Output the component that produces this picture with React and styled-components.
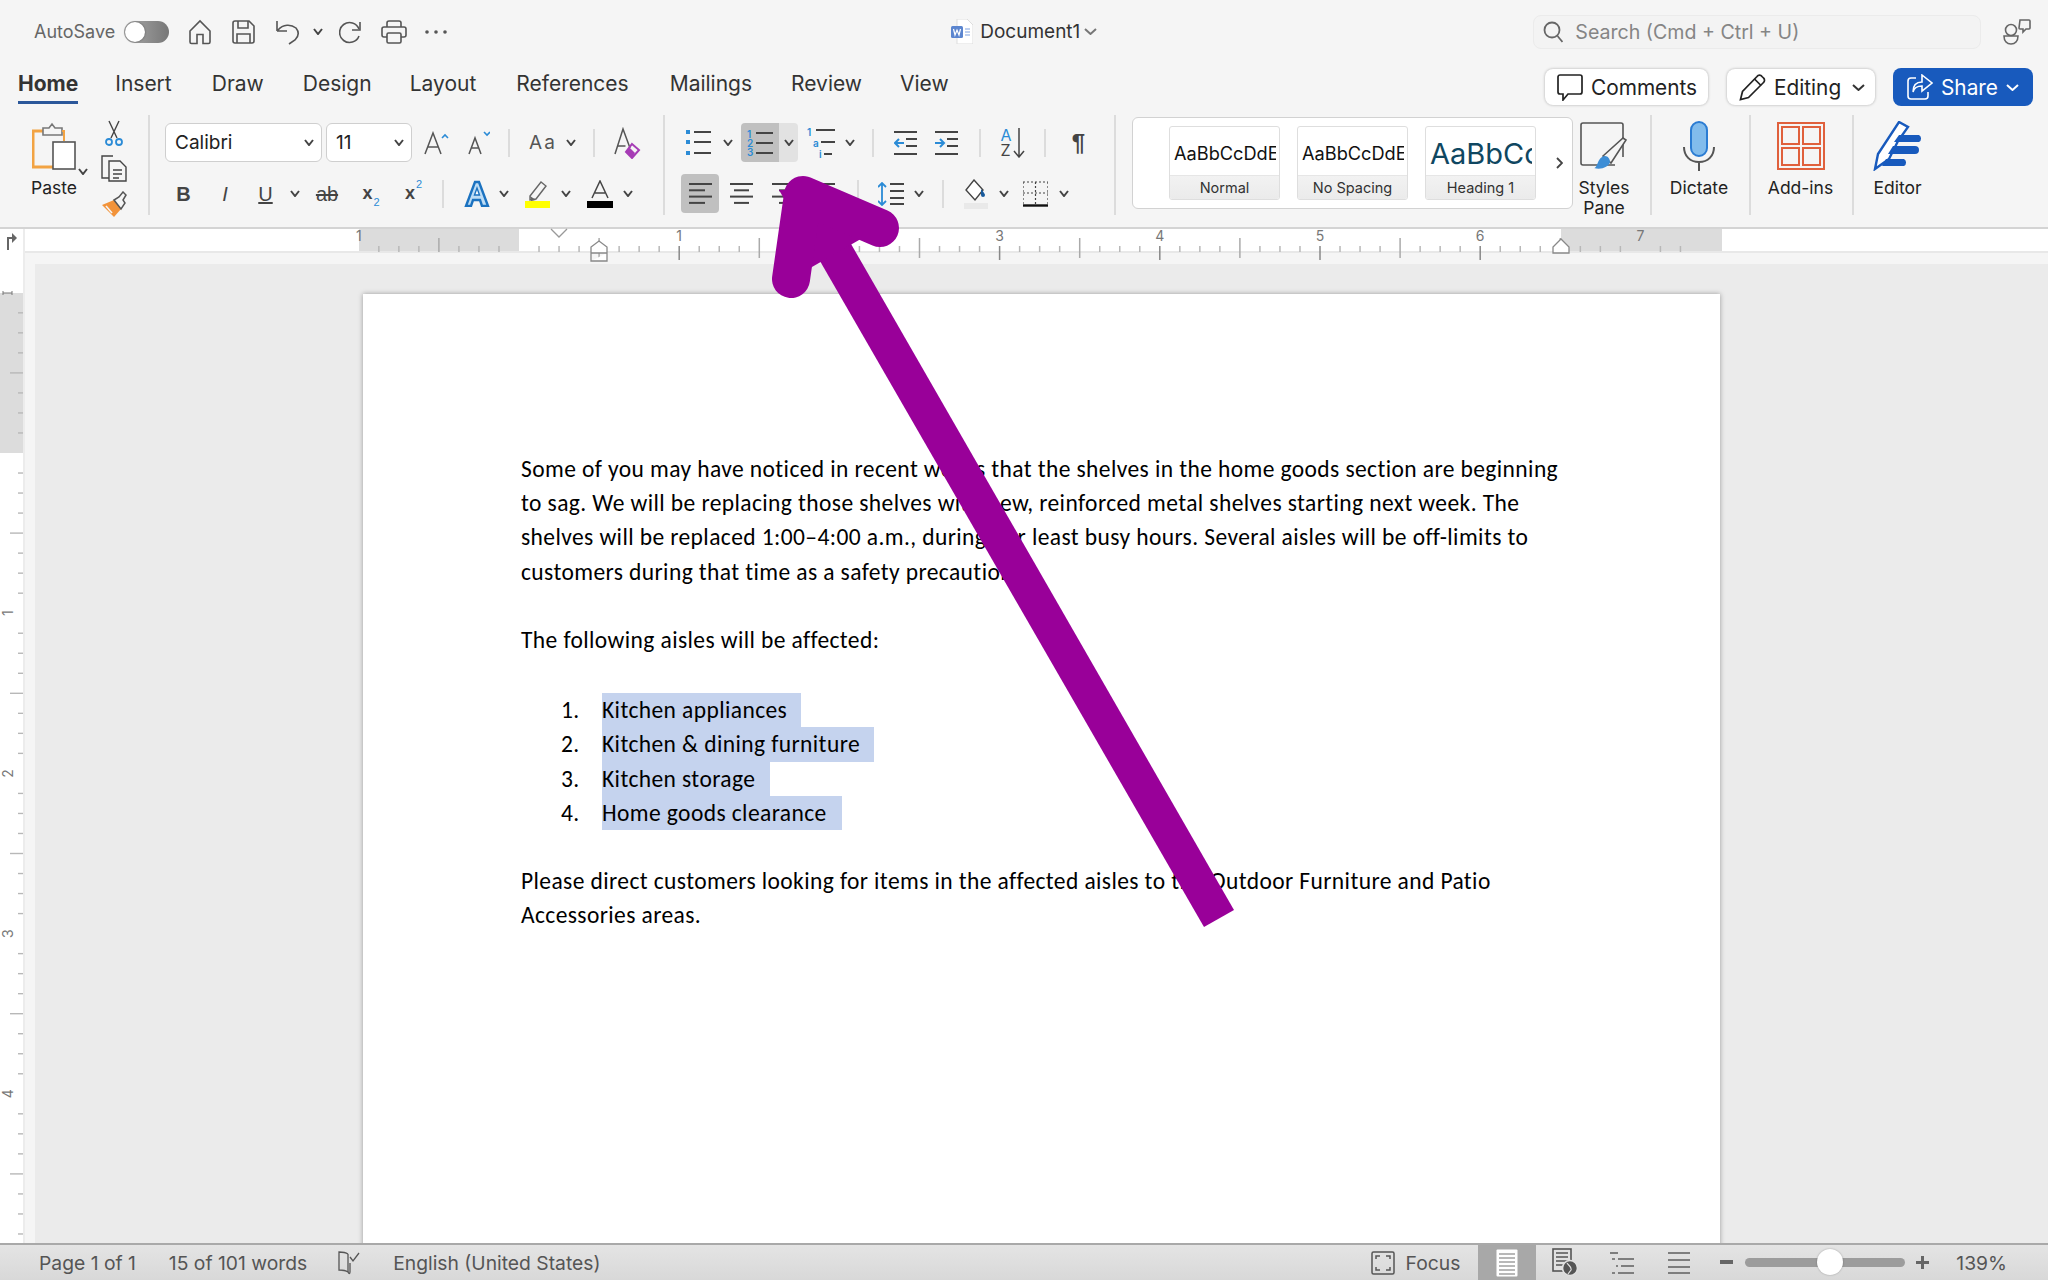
import React from 'react';
import styled, { createGlobalStyle } from 'styled-components';

const GlobalStyle = createGlobalStyle`
  html, body { margin: 0; padding: 0; background: #f5f5f5; }
  body { font-family: Inter, "Liberation Sans", sans-serif; overflow: hidden; }
`;

const Window = styled.div`
  position: relative;
  width: 2048px;
  height: 1280px;
  display: flex;
  flex-direction: column;
  overflow: hidden;
  background: #f5f5f5;
`;

/* title bar */
const TitleBar = styled.div`
  height: 63px;
  flex-shrink: 0;
  display: flex;
  align-items: center;
`;
const AutoSaveLabel = styled.span`
  margin-left: 34px;
  font-size: 18px;
  color: #666;
`;
const Toggle = styled.div`
  width: 45px;
  height: 22px;
  margin-left: 9px;
  border-radius: 11px;
  background: linear-gradient(90deg, #aaa, #777);
  display: flex;
  align-items: center;
  padding-left: 1px;
  box-sizing: border-box;
`;
const Knob = styled.div`
  width: 20px;
  height: 20px;
  border-radius: 50%;
  background: #fff;
  box-shadow: 0 0 2px rgba(0, 0, 0, 0.5);
`;
const Slot = styled.div`
  width: ${p => p.$w}px;
  margin-left: ${p => p.$ml || 0}px;
  flex-shrink: 0;
  display: flex;
  align-items: center;
  justify-content: center;
`;
const DocTitle = styled.span`
  margin-left: 7px;
  font-size: 19px;
  color: #333;
`;
const SearchBox = styled.div`
  width: 448px;
  height: 34px;
  margin-left: 436px;
  box-sizing: border-box;
  background: #f3f3f3;
  border: 1px solid #ebebeb;
  border-radius: 8px;
  display: flex;
  align-items: center;
  padding-left: 9px;
  gap: 12px;
`;
const SearchText = styled.span`
  font-size: 19.6px;
  color: #858585;
`;

/* tab row */
const TabRow = styled.div`
  height: 52px;
  flex-shrink: 0;
  display: flex;
  align-items: flex-start;
  box-sizing: border-box;
  padding-left: 18px;
`;
const Tab = styled.div`
  height: 41px;
  margin-right: ${p => p.$mr}px;
  box-sizing: border-box;
  padding-top: 9px;
  font-size: 21px;
  line-height: 24px;
  font-weight: ${p => (p.$active ? 700 : 400)};
  color: #333;
  border-bottom: ${p => (p.$active ? '3px solid #2b579a' : '3px solid transparent')};
`;
const TabActions = styled.div`
  margin-left: auto;
  margin-right: 15px;
  padding-top: 5px;
  display: flex;
  align-items: center;
`;
const ActionButton = styled.div`
  height: 36px;
  width: ${p => p.$w}px;
  margin-left: ${p => p.$ml}px;
  box-sizing: border-box;
  display: flex;
  align-items: center;
  padding-left: 12px;
  gap: 8px;
  background: #fff;
  border-radius: 8px;
  box-shadow: 0 0 3px rgba(0, 0, 0, 0.3);
  font-size: 20.8px;
  color: #222;
`;
const ShareButton = styled(ActionButton)`
  height: 38px;
  background: #185abd;
  box-shadow: none;
  color: #fff;
  padding-left: 14px;
`;

/* ribbon */
const Ribbon = styled.div`
  height: 112px;
  flex-shrink: 0;
  display: flex;
  align-items: stretch;
`;
const Sep = styled.div`
  width: 2px;
  flex-shrink: 0;
  background: #dcdcdc;
  margin-bottom: 12px;
`;
const MiniSep = styled.div`
  width: 2px;
  height: 28px;
  flex-shrink: 0;
  margin-left: ${p => p.$ml}px;
  background: #dcdcdc;
`;
const PasteGroup = styled.div`
  width: 148px;
  flex-shrink: 0;
  display: flex;
`;
const PasteColumn = styled.div`
  margin-left: 27px;
  width: 54px;
  display: flex;
  flex-direction: column;
  align-items: center;
  padding-top: 7px;
`;
const RibbonLabel = styled.span`
  font-size: 17.5px;
  line-height: 20px;
  color: #222;
  text-align: center;
`;
const PasteLabel = styled(RibbonLabel)`
  margin-top: 8px;
`;
const ClipColumn = styled.div`
  margin-left: 12px;
  padding-top: 5px;
  width: 27px;
  display: flex;
  flex-direction: column;
  align-items: center;
  gap: 9px;
`;
const TwoRows = styled.div`
  width: ${p => p.$w}px;
  flex-shrink: 0;
  display: flex;
  flex-direction: column;
  padding-top: 8px;
  gap: 12px;
`;
const ToolRow = styled.div`
  height: 39px;
  display: flex;
  align-items: center;
`;
const Select = styled.div`
  width: ${p => p.$w}px;
  height: 39px;
  margin-left: ${p => p.$ml}px;
  box-sizing: border-box;
  flex-shrink: 0;
  background: #fff;
  border: 1px solid #cfcfcf;
  border-radius: 6px;
  display: flex;
  align-items: center;
  justify-content: space-between;
  padding: 0 7px 0 9px;
  font-size: 19px;
  color: #222;
`;
const NumberingButton = styled.div`
  width: 57px;
  height: 39px;
  margin-left: 8px;
  flex-shrink: 0;
  display: flex;
  border-radius: 4px;
  overflow: hidden;
`;
const NumberingMain = styled.div`
  width: 38px;
  background: #c0c0c0;
  display: flex;
  align-items: center;
  justify-content: center;
`;
const NumberingDrop = styled.div`
  flex: 1;
  background: #e2e2e2;
  display: flex;
  align-items: center;
  justify-content: center;
`;
const ActiveAlign = styled.div`
  width: 38px;
  height: 39px;
  margin-left: 16px;
  flex-shrink: 0;
  border-radius: 4px;
  background: #c0c0c0;
  display: flex;
  align-items: center;
  justify-content: center;
`;
const Gallery = styled.div`
  width: 441px;
  height: 92px;
  margin: 2px 0 0 16px;
  flex-shrink: 0;
  box-sizing: border-box;
  background: #fff;
  border: 1px solid #d2d2d2;
  border-radius: 6px;
  display: flex;
  align-items: center;
  padding-left: 36px;
  gap: 17px;
`;
const StyleCard = styled.div`
  width: 111px;
  height: 74px;
  flex-shrink: 0;
  box-sizing: border-box;
  border: 1px solid #dedede;
  border-radius: 3px;
  display: flex;
  flex-direction: column;
  overflow: hidden;
`;
const StylePreview = styled.div`
  height: 48px;
  box-sizing: border-box;
  padding: 4px 0 0 4px;
  display: flex;
  align-items: center;
  justify-content: flex-start;
  margin-right: 3px;
  overflow: hidden;
  white-space: nowrap;
  font-size: ${p => (p.$heading ? 29 : 18.2)}px;
  color: ${p => (p.$heading ? '#0f4761' : '#111')};
`;
const StyleName = styled.div`
  flex: 1;
  background: linear-gradient(#f2f2f2, #ebebeb);
  border-top: 1px solid #e6e6e6;
  display: flex;
  align-items: center;
  justify-content: center;
  font-size: 14.5px;
  color: #333;
`;
const GalleryMore = styled.div`
  margin-left: 3px;
  display: flex;
`;
const BigTool = styled.div`
  width: ${p => p.$w}px;
  flex-shrink: 0;
  box-sizing: border-box;
  padding: 7px ${p => p.$pr || 0}px 0 0;
  display: flex;
  flex-direction: column;
  align-items: center;
`;
const BigIcon = styled.div`
  height: 48px;
  margin-bottom: 8px;
  display: flex;
  align-items: center;
  justify-content: center;
`;

/* horizontal ruler */
const RulerBar = styled.div`
  height: 26px;
  flex-shrink: 0;
  display: flex;
  box-sizing: border-box;
  border-top: 2px solid #d4d4d4;
  background: #fff;
`;
const RulerCorner = styled.div`
  width: 25px;
  flex-shrink: 0;
  border-right: 2px solid #ececec;
  box-sizing: border-box;
  display: flex;
  align-items: center;
  justify-content: center;
`;
const RulerTrack = styled.div`
  position: relative;
  flex: 1;
  display: flex;
  border-bottom: 2px solid #e8e8e8;
`;
const RulerBlank = styled.div`
  width: ${p => p.$w}px;
  flex-shrink: 0;
`;
const RulerMargin = styled.div`
  width: ${p => p.$w}px;
  flex-shrink: 0;
  background: #dcdcdc;
`;
const RulerMarks = styled.svg`
  position: absolute;
  left: 0;
  top: 0;
  overflow: visible;
`;

/* document area */
const Workspace = styled.div`
  flex: 1;
  min-height: 0;
  display: flex;
`;
const VRuler = styled.div`
  position: relative;
  width: 25px;
  flex-shrink: 0;
  box-sizing: border-box;
  border-right: 2px solid #ececec;
  background: #fff;
  padding-top: 40px;
  overflow: hidden;
`;
const VRulerMargin = styled.div`
  height: 160px;
  background: #dcdcdc;
`;
const VRulerMarks = styled.svg`
  position: absolute;
  left: 0;
  top: 0;
`;
const CanvasBand = styled.div`
  flex: 1;
  min-width: 0;
  background: #f5f5f5;
  padding: 11px 0 0 10px;
  display: flex;
`;
const Canvas = styled.div`
  flex: 1;
  background: #ebebeb;
  padding: 30px 0 0 328px;
  overflow: hidden;
`;
const Page = styled.div`
  width: 1357px;
  height: 1000px;
  box-sizing: border-box;
  background: #fff;
  box-shadow: 0 0 5px rgba(0, 0, 0, 0.35);
  padding: 158px 0 0 158px;
  font-family: Carlito, Lato, sans-serif;
  font-size: 23.5px;
  letter-spacing: 0.4px;
  line-height: 34.2px;
  color: #000;
`;
const Line = styled.div`
  height: 34.2px;
  white-space: nowrap;
  margin-bottom: ${p => p.$gap || 0}px;
`;
const ListItem = styled.div`
  height: 34.2px;
  display: flex;
  white-space: nowrap;
  margin-bottom: ${p => p.$gap || 0}px;
`;
const ListNumber = styled.span`
  width: 81px;
  box-sizing: border-box;
  padding-left: 40px;
  flex-shrink: 0;
`;
const Selected = styled.span`
  display: block;
  width: ${p => p.$w}px;
  background: #c5d3ee;
`;

/* status bar */
const StatusBar = styled.div`
  height: 37px;
  flex-shrink: 0;
  box-sizing: border-box;
  border-top: 2px solid #a9a9a9;
  background: linear-gradient(#e4e4e4, #d8d8d8);
  display: flex;
  align-items: center;
  font-size: 19.3px;
  color: #555;
`;
const StatusText = styled.span`
  margin-left: ${p => p.$ml}px;
  white-space: nowrap;
`;
const StatusRight = styled.div`
  margin-left: auto;
  padding-right: 41px;
  display: flex;
  align-items: center;
`;
const ViewActive = styled.div`
  width: 58px;
  height: 35px;
  margin-left: 18px;
  background: #a8a8a8;
  display: flex;
  align-items: center;
  justify-content: center;
`;
const ZoomTrack = styled.div`
  width: 160px;
  height: 9px;
  margin-left: 12px;
  position: relative;
  border-radius: 5px;
  background: #9c9c9c;
  flex-shrink: 0;
`;
const ZoomThumb = styled.div`
  position: absolute;
  left: 72px;
  top: -9px;
  width: 26px;
  height: 26px;
  border-radius: 50%;
  background: #fff;
  box-shadow: 0 0 2px rgba(0, 0, 0, 0.3);
`;

const ArrowLayer = styled.svg`
  position: absolute;
  left: 0;
  top: 0;
  pointer-events: none;
`;

/* icons */
const G = '#555';
const Ic = ({ w, h, children, fill = 'none', stroke = G, sw = 1.6 }) => (
  <svg width={w} height={h} viewBox={`0 0 ${w} ${h}`} fill={fill} stroke={stroke} strokeWidth={sw} style={{ display: 'block', flexShrink: 0 }}>
    {children}
  </svg>
);
const Chevron = ({ w = 10, color = '#444' }) => (
  <Ic w={w} h={7} stroke={color} sw={2}>
    <path d={`M1 1l${w / 2 - 1} ${5}l${w / 2 - 1} -5`} />
  </Ic>
);
const Lines = ({ x = 0, ys, w, color = '#444', sw = 2 }) =>
  ys.map(y => <path key={y} d={`M${x} ${y}h${w}`} stroke={color} strokeWidth={sw} />);
const BlueDigit = ({ x, y, children }) => (
  <text x={x} y={y} fontSize="10" fontWeight="600" fontFamily="Inter, sans-serif" fill="#2b8bd6" stroke="none">{children}</text>
);

const HomeIcon = () => (
  <Ic w={24} h={26}><path d="M2 12L12 2l10 10v11a1.5 1.5 0 0 1-1.5 1.5H15v-9H9v9H3.500A1.500 1.500 0 0 1 2 23z" /></Ic>
);
const SaveIcon = () => (
  <Ic w={23} h={24}><path d="M1 3a2 2 0 0 1 2-2h14l5 5v15a2 2 0 0 1-2 2H3a2 2 0 0 1-2-2z" /><path d="M6 1v7h10V1M5 23v-9h13v9" /></Ic>
);
const UndoIcon = () => (
  <Ic w={24} h={26}><path d="M1 12V2M1 12h10M2 11c5-6 13-6 18-2 4 5 2 9-1 12l-6 4" /></Ic>
);
const RedoIcon = () => (
  <Ic w={23} h={24}><path d="M21 2v8h-8" /><path d="M20 9a10 10 0 1 0 0 7" /></Ic>
);
const PrintIcon = () => (
  <Ic w={26} h={24}><path d="M6 7V3a2 2 0 0 1 2-2h10a2 2 0 0 1 2 2v4M6 17H3a2 2 0 0 1-2-2V9a2 2 0 0 1 2-2h20a2 2 0 0 1 2 2v6a2 2 0 0 1-2 2h-3" /><rect x="6" y="13" width="14" height="10" rx="1.500" /></Ic>
);
const MoreIcon = () => (
  <Ic w={22} h={4} fill={G} stroke="none"><circle cx="2" cy="2" r="1.800" /><circle cx="11" cy="2" r="1.800" /><circle cx="20" cy="2" r="1.800" /></Ic>
);
const WordDocIcon = () => (
  <Ic w={22} h={25} stroke="none">
    <path d="M6 0h10l6 6v18a1 1 0 0 1-1 1H6z" fill="#fff" stroke="#ddd" strokeWidth="1" />
    <rect x="0" y="7" width="12" height="12" rx="1.500" fill="#5b85cf" />
    <path d="M2.500 10l1.500 6 2-5 2 5 1.500-6" stroke="#fff" strokeWidth="1.200" />
    <path d="M14 10h5M14 13h5M14 16h5" stroke="#a9c1ea" strokeWidth="1.400" />
  </Ic>
);
const SearchIcon = () => (
  <Ic w={20} h={22} stroke="#666" sw={1.800}><circle cx="9" cy="9" r="7.500" /><path d="M14.500 15l5 6" /></Ic>
);
const PersonChatIcon = () => (
  <Ic w={28} h={26} stroke="#666">
    <path d="M17 1h9a1 1 0 0 1 1 1v7a1 1 0 0 1-1 1h-3l-3 3v-3h-3a1 1 0 0 1-1-1z" fill="#f5f5f5" />
    <circle cx="8" cy="11" r="5.500" />
    <path d="M1 17h14c0 5-3 8-7 8s-7-3-7-8z" />
  </Ic>
);
const CommentIcon = () => (
  <Ic w={26} h={27} stroke="#222" sw={1.700}><path d="M3 1h20a2 2 0 0 1 2 2v15a2 2 0 0 1-2 2H11l-5 6v-6H3a2 2 0 0 1-2-2V3a2 2 0 0 1 2-2z" /></Ic>
);
const PencilIcon = () => (
  <Ic w={27} h={27} stroke="#222" sw={1.700}><path d="M1.500 25.500l2-8L18 2.500a3 3 0 0 1 5 0l1.500 1.500a3 3 0 0 1 0 4.500L9.500 23.500z" /><path d="M15.500 5l6.500 6.500" /></Ic>
);
const ShareIcon = () => (
  <Ic w={26} h={26} stroke="#fff" sw={1.600}><path d="M9 4H4a3 3 0 0 0-3 3v15a3 3 0 0 0 3 3h14a3 3 0 0 0 3-3v-4" /><path d="M15 1l10 8-10 8v-5c-5 0-8 2-9 6 0-7 4-10 9-10z" /></Ic>
);
const PasteIcon = () => (
  <Ic w={44} h={48}>
    <path d="M14 9H1v36h20" stroke="#f2a343" strokeWidth="3" />
    <path d="M11 13V6h6l3-4 3 4h7v7z" fill="#f5f5f5" stroke="#777" />
    <path d="M30 9h2v10" stroke="#f2a343" strokeWidth="2" />
    <rect x="21" y="20" width="22" height="27" fill="#fff" stroke="#555" strokeWidth="1.600" />
  </Ic>
);
const ScissorsIcon = () => (
  <Ic w={18} h={26} stroke="#444" sw={1.400}>
    <path d="M4 1l8 17M14 1l-8 17" />
    <circle cx="4" cy="22" r="3" stroke="#2b8bd6" strokeWidth="1.800" />
    <circle cx="14" cy="22" r="3" stroke="#2b8bd6" strokeWidth="1.800" />
  </Ic>
);
const CopyIcon = () => (
  <Ic w={26} h={27} stroke="#444" sw={1.400}>
    <path d="M12 1H1v22h7" />
    <path d="M8 6h11l6 6v14H8z" fill="#f5f5f5" />
    <path d="M12 15h9M12 19h9M12 23h6" />
  </Ic>
);
const PainterIcon = () => (
  <Ic w={26} h={26} stroke="none">
    <path d="M1 14l12-5 7 9-7 8z" fill="#f2933a" />
    <path d="M5 15l6 7" stroke="#f5f5f5" strokeWidth="1.600" />
    <path d="M13 9l7 9 4-6-2-3 3-5-3-3-4 5z" fill="#f5f5f5" stroke="#555" strokeWidth="1.500" />
  </Ic>
);
const GrowIcon = ({ up }) => (
  <Ic w={up ? 25 : 22} h={24} stroke="#555" sw={1.500}>
    <path d={up ? 'M1 23l8-21 8 21M4 16h10' : 'M1 23l6-16 6 16M3.500 17h7'} />
    <path d={up ? 'M18 7l3-3 3 3' : 'M16 1l3 3 3-3'} stroke="#2b8bd6" strokeWidth="1.600" />
  </Ic>
);
const CaseIcon = () => <CaseText>Aa</CaseText>;
const CaseText = styled.span`
  font-size: 19px;
  letter-spacing: 2px;
  color: #555;
`;
const ClearIcon = () => (
  <Ic w={27} h={32} stroke="#555" sw={1.500}>
    <path d="M1 27L9 2l7 19" />
    <path d="M3.500 19h8" />
    <path d="M18 17l7 6-7 8-6-6z" stroke="#a63cb5" strokeWidth="2" />
    <path d="M15 20l6 6-3 5-6-6z" fill="#a63cb5" stroke="none" />
  </Ic>
);
const StyleLetter = styled.span`
  font-family: "Liberation Sans", sans-serif;
  font-size: ${p => p.$s || 20}px;
  font-weight: ${p => (p.$b ? 700 : 400)};
  font-style: ${p => (p.$i ? 'italic' : 'normal')};
  color: #444;
  line-height: 1;
`;
const UnderLetter = styled(StyleLetter)`
  text-decoration: underline;
`;
const StrikeLetter = styled(StyleLetter)`
  text-decoration: line-through;
`;
const ScriptLetter = styled.span`
  position: relative;
  font-family: "Liberation Sans", sans-serif;
  font-weight: 700;
  font-size: 18px;
  color: #444;
  padding-right: 7px;
`;
const ScriptMark = styled.span`
  position: absolute;
  right: 0;
  font-size: 11px;
  font-weight: 400;
  color: #2b8bd6;
  ${p => (p.$up ? 'top: -5px;' : 'bottom: -4px;')}
`;
const TextEffectIcon = () => (
  <Ic w={26} h={27}>
    <path d="M2 26L11 2h4l9 24h-6l-2-6H9l-2 6z" fill="#bcdcf5" stroke="#1b72c0" strokeWidth="2.400" />
    <path d="M10.500 15l2.500-7 2.500 7z" fill="#fff" stroke="#1b72c0" strokeWidth="1.400" />
  </Ic>
);
const HighlightIcon = () => (
  <Ic w={26} h={28} stroke="none">
    <path d="M5 16l11-14 5 4-10 13-6 1z" fill="#f5f5f5" stroke="#666" strokeWidth="1.400" />
    <path d="M5 16l6 4-5 1z" fill="#666" />
    <rect x="0" y="21" width="25" height="7" fill="#ffff00" />
  </Ic>
);
const FontColorIcon = () => (
  <Ic w={26} h={28} stroke="#444" sw={1.500}>
    <path d="M5 18L13 1l8 17M8 13h10" />
    <rect x="0" y="21" width="26" height="7" fill="#000" stroke="none" />
  </Ic>
);
const BulletsIcon = () => (
  <Ic w={25} h={25}>
    <path d="M0 0h4v4H0zM0 10h4v4H0zM0 21h4v4H0z" fill="#2b8bd6" stroke="none" />
    <Lines x={8} ys={[2, 12, 23]} w={17} />
  </Ic>
);
const NumberedIcon = () => (
  <Ic w={26} h={26}>
    <BlueDigit x={0} y={8}>1</BlueDigit>
    <BlueDigit x={0} y={17}>2</BlueDigit>
    <BlueDigit x={0} y={26}>3</BlueDigit>
    <Lines x={9} ys={[3, 13, 23]} w={17} />
  </Ic>
);
const MultiListIcon = () => (
  <Ic w={28} h={30}>
    <BlueDigit x={0} y={8}>1</BlueDigit>
    <BlueDigit x={6} y={19}>a</BlueDigit>
    <BlueDigit x={12} y={30}>i</BlueDigit>
    <Lines x={9} ys={[2]} w={19} />
    <Lines x={14} ys={[14]} w={14} />
    <Lines x={17} ys={[26]} w={8} />
  </Ic>
);
const IndentIcon = ({ right }) => (
  <Ic w={23} h={26}>
    <Lines x={0} ys={[2, 24]} w={23} />
    <Lines x={12} ys={[9, 16]} w={11} />
    <path d={right ? 'M0 13h9M5 9l4 4-4 4' : 'M1 13h9M5 9l-4 4 4 4'} stroke="#2b8bd6" strokeWidth="2" />
  </Ic>
);
const SortIcon = () => (
  <SortWrap>
    <SortLetters>
      <SortA>A</SortA>
      <span>Z</span>
    </SortLetters>
    <Ic w={12} h={30} stroke="#444" sw={1.500}><path d="M6 0v29M1 23l5 6 5-6" /></Ic>
  </SortWrap>
);
const SortWrap = styled.div`
  display: flex;
  align-items: center;
  gap: 1px;
`;
const SortLetters = styled.div`
  display: flex;
  flex-direction: column;
  font-size: 16px;
  line-height: 15px;
  color: #444;
`;
const SortA = styled.span`
  color: #2b8bd6;
`;
const Pilcrow = styled.span`
  font-family: "Liberation Sans", sans-serif;
  font-size: 24px;
  font-weight: 700;
  color: #444;
`;
const AlignIcon = ({ mode }) => {
  const rows = mode === 'left'
    ? [[0, 23], [0, 16], [0, 23], [0, 16]]
    : mode === 'center'
      ? [[0, 23], [4, 15], [0, 23], [4, 15]]
      : mode === 'right'
        ? [[0, 23], [7, 16], [0, 23], [7, 16]]
        : [[0, 23], [0, 23], [0, 23], [0, 23]];
  return (
    <Ic w={23} h={23}>
      {rows.map(([x, w], i) => <path key={i} d={`M${x} ${2 + i * 6.300}h${w}`} stroke="#444" strokeWidth="2" />)}
    </Ic>
  );
};
const LineSpacingIcon = () => (
  <Ic w={26} h={24}>
    <path d="M4 1v22M0 5l4-4 4 4M0 19l4 4 4-4" stroke="#2b8bd6" strokeWidth="1.800" />
    <Lines x={12} ys={[2, 9, 16, 22]} w={14} />
  </Ic>
);
const ShadingIcon = () => (
  <Ic w={24} h={30} stroke="none">
    <path d="M10 1l9 10-8 10-9-10z" fill="#fff" stroke="#444" strokeWidth="1.400" />
    <path d="M17 10c2 2 4 5 4 6a2 2 0 0 1-4 0z" fill="#185a9c" />
    <rect x="0" y="24" width="24" height="6" fill="#e9e9e9" />
  </Ic>
);
const BordersIcon = () => (
  <Ic w={25} h={26} stroke="#444" sw={1.200}>
    <path d="M0 1h25M0 1v22M25 1v22M12.500 1v22M0 12h25" strokeDasharray="2 2" />
    <path d="M0 24.500h25" stroke="#111" strokeWidth="2.400" />
  </Ic>
);
const PaneIcon = () => (
  <Ic w={50} h={50} stroke="#555" sw={1.600}>
    <path d="M36 44H4a2 2 0 0 1-2-2V4a2 2 0 0 1 2-2h38a2 2 0 0 1 2 2v32" />
    <path d="M24 35L44 17l3 2-15 23z" fill="#f5f5f5" />
    <path d="M15 47c4 0 3-11 11-12 3 0 5 3 5 6-1 5-9 8-16 6z" fill="#3d8ed6" stroke="none" />
  </Ic>
);
const MicIcon = () => (
  <Ic w={32} h={50} stroke="#555" sw={2}>
    <rect x="8" y="1" width="16" height="34" rx="8" fill="#82bcec" stroke="#2b7cd3" />
    <path d="M1 26c0 9 6 15 15 15s15-6 15-15M16 41v9" />
  </Ic>
);
const AddInsIcon = () => (
  <Ic w={48} h={48} stroke="#e0603c" sw={2}>
    <rect x="1" y="1" width="46" height="46" />
    <rect x="5" y="5" width="17" height="17" />
    <rect x="26" y="5" width="17" height="17" />
    <rect x="5" y="26" width="17" height="17" />
    <rect x="26" y="26" width="17" height="17" />
  </Ic>
);
const EditorIcon = () => (
  <Ic w={50} h={50} stroke="none">
    <path d="M2 48L5 33 26 1l9 5-10 14-9 18z" fill="#fff" stroke="#185abd" strokeWidth="2.400" />
    <path d="M26 14h20a4 4 0 0 1 0 7H21zM20 25h22a4 4 0 0 1 0 8H15zM13 38h18a4 4 0 0 1 0 7H9z" fill="#185abd" />
  </Ic>
);
const CornerIcon = () => (
  <Ic w={11} h={17} stroke="#666" sw={2}>
    <path d="M2 17V5h5" />
    <path d="M6 0l5 5-5 5z" fill="#666" stroke="none" />
  </Ic>
);
const ProofIcon = () => (
  <Ic w={22} h={24} stroke="#555" sw={1.300}>
    <path d="M10 3c-3-2-6-2-9-2v18c3 0 6 0 9 2 1 2 2 2 2 0V12" />
    <path d="M10 3v18M12 6l3 4 6-8" />
  </Ic>
);
const FocusIcon = () => (
  <Ic w={24} h={24} stroke="#555" sw={1.500}>
    <rect x="1" y="1" width="22" height="22" rx="1.500" />
    <path d="M5 8V5h4M15 5h4v3M19 16v3h-4M9 19H5v-3" />
  </Ic>
);
const PrintViewIcon = () => (
  <Ic w={22} h={28}>
    <rect x="0.500" y="0.500" width="21" height="27" rx="1" fill="#fff" stroke="none" />
    <Lines x={3} ys={[5, 9, 13, 17, 21, 25]} w={16} color="#9a9a9a" sw={1.400} />
  </Ic>
);
const WebViewIcon = () => (
  <Ic w={26} h={29} stroke="#555">
    <rect x="1" y="1" width="18" height="22" fill="#e0e0e0" />
    <Lines x={4} ys={[5, 9, 13, 17]} w={12} color="#555" sw={1.500} />
    <circle cx="18" cy="20" r="7.500" fill="#555" stroke="#e0e0e0" />
    <path d="M15 15c2 3 5 4 4 7l-3 4" stroke="#e0e0e0" strokeWidth="1.200" />
  </Ic>
);
const OutlineViewIcon = () => (
  <Ic w={24} h={22}>
    <Lines x={0} ys={[1]} w={8} sw={1.600} color="#666" />
    <path d="M2 7h3M6 14h2M2 21h3" stroke="#666" strokeWidth="1.600" />
    <Lines x={8} ys={[7]} w={16} sw={1.600} color="#666" />
    <Lines x={11} ys={[14]} w={13} sw={1.600} color="#666" />
    <Lines x={8} ys={[21]} w={16} sw={1.600} color="#666" />
  </Ic>
);
const DraftViewIcon = () => (
  <Ic w={22} h={22}>
    <Lines x={0} ys={[1, 8, 15, 21]} w={22} sw={1.600} color="#666" />
  </Ic>
);
const ZoomMinus = () => <Ic w={13} h={5} fill="#666" stroke="none"><rect width="13" height="4" /></Ic>;
const ZoomPlus = () => <Ic w={13} h={13} fill="#666" stroke="none"><path d="M5 0h3v5h5v3H8v5H5V8H0V5h5z" /></Ic>;

const INCH = 160.2;
const ZERO_X = 494; // 0 inch position inside the track
const HRulerMarks = () => {
  const ticks = [];
  for (let i = -8; i <= 58; i++) {
    if (i % 8 === 0) continue;
    const x = ZERO_X + (i * INCH) / 8;
    const half = i % 4 === 0;
    const inside = i > 0 && i < 52;
    ticks.push(
      <path
        key={i}
        d={`M${x} ${half ? 9 : 17}V${inside && half ? 29 : 23}`}
        stroke={half ? '#aaa' : '#b8b8b8'}
        strokeWidth="1.500"
      />
    );
  }
  const numbers = [[-1, '1'], [1, '1'], [2, '2'], [3, '3'], [4, '4'], [5, '5'], [6, '6'], [7, '7']];
  return (
    <RulerMarks width="1720" height="24">
      {numbers.map(([n, label]) => (
        <text key={n} x={ZERO_X + n * INCH} y="12" fontSize="14" fontFamily="Inter, sans-serif" textAnchor="middle" fill="#777">{label}</text>
      ))}
      {[1, 2, 3, 4, 5, 6].map(n => (
        <path key={n} d={`M${ZERO_X + n * INCH} 17V31`} stroke="#888" strokeWidth="1.500" />
      ))}
      {ticks}
      <path d="M526 0l8 8 8-8" fill="#fff" stroke="#999" strokeWidth="1.300" />
      <path d="M566 32V18l8-6 8 6v6h-16v8h16v-8" fill="#fff" stroke="#888" strokeWidth="1.300" />
      <path d="M1528 24v-6l8-8 8 8v6z" fill="#fff" stroke="#888" strokeWidth="1.300" />
    </RulerMarks>
  );
};
const VRulerTicks = () => {
  const ticks = [];
  for (let i = -8; i <= 48; i++) {
    const y = 200 + (i * INCH) / 8;
    if (i % 8 === 0) continue;
    const half = i % 4 === 0;
    ticks.push(<path key={i} d={`M${half ? 10 : 18} ${y}H24`} stroke="#b8b8b8" strokeWidth="1.400" />);
  }
  return (
    <VRulerMarks width="25" height="990">
      {[1, 2, 3, 4].map(n => (
        <text key={n} x="8" y={200 + n * INCH} fontSize="14" fontFamily="Inter, sans-serif" textAnchor="middle" fill="#777" transform={`rotate(-90 8 ${200 + n * INCH})`} dy="5">{n}</text>
      ))}
      <path d="M3 40h9M3 38v4M12 38v4" stroke="#777" strokeWidth="1" />
      {ticks}
    </VRulerMarks>
  );
};

const App = () => (
  <Window>
    <GlobalStyle />
    <TitleBar>
      <AutoSaveLabel>AutoSave</AutoSaveLabel>
      <Toggle><Knob /></Toggle>
      <Slot $w={24} $ml={19}><HomeIcon /></Slot>
      <Slot $w={23} $ml={20}><SaveIcon /></Slot>
      <Slot $w={24} $ml={21}><UndoIcon /></Slot>
      <Slot $w={10} $ml={13}><Chevron /></Slot>
      <Slot $w={23} $ml={16}><RedoIcon /></Slot>
      <Slot $w={26} $ml={19}><PrintIcon /></Slot>
      <Slot $w={22} $ml={18}><MoreIcon /></Slot>
      <Slot $w={22} $ml={504}><WordDocIcon /></Slot>
      <DocTitle>Document1</DocTitle>
      <Slot $w={13} $ml={4}><Chevron w={13} color="#777" /></Slot>
      <SearchBox>
        <SearchIcon />
        <SearchText>Search (Cmd + Ctrl + U)</SearchText>
      </SearchBox>
      <Slot $w={28} $ml={22}><PersonChatIcon /></Slot>
    </TitleBar>

    <TabRow>
      <Tab $active $mr={37}>Home</Tab>
      <Tab $mr={40}>Insert</Tab>
      <Tab $mr={39}>Draw</Tab>
      <Tab $mr={38}>Design</Tab>
      <Tab $mr={40}>Layout</Tab>
      <Tab $mr={41}>References</Tab>
      <Tab $mr={39}>Mailings</Tab>
      <Tab $mr={38}>Review</Tab>
      <Tab $mr={0}>View</Tab>
      <TabActions>
        <ActionButton $w={163} $ml={0}><CommentIcon />Comments</ActionButton>
        <ActionButton $w={148} $ml={19}><PencilIcon />Editing<Slot $w={13} $ml={3}><Chevron w={13} color="#333" /></Slot></ActionButton>
        <ShareButton $w={140} $ml={18}><ShareIcon />Share<Slot $w={13}><Chevron w={13} color="#fff" /></Slot></ShareButton>
      </TabActions>
    </TabRow>

    <Ribbon>
      <PasteGroup>
        <PasteColumn>
          <PasteIcon />
          <PasteLabel>Paste</PasteLabel>
        </PasteColumn>
        <Slot $w={10} $ml={-3}><Chevron /></Slot>
        <ClipColumn>
          <ScissorsIcon />
          <CopyIcon />
          <PainterIcon />
        </ClipColumn>
      </PasteGroup>
      <Sep />
      <TwoRows $w={513}>
        <ToolRow>
          <Select $w={157} $ml={15}>Calibri<Chevron /></Select>
          <Select $w={86} $ml={4}>11<Chevron /></Select>
          <Slot $w={25} $ml={12}><GrowIcon up /></Slot>
          <Slot $w={22} $ml={19}><GrowIcon /></Slot>
          <MiniSep $ml={18} />
          <Slot $w={26} $ml={20}><CaseIcon /></Slot>
          <Slot $w={10} $ml={10}><Chevron /></Slot>
          <MiniSep $ml={17} />
          <Slot $w={27} $ml={19}><ClearIcon /></Slot>
        </ToolRow>
        <ToolRow>
          <Slot $w={13} $ml={27}><StyleLetter $b>B</StyleLetter></Slot>
          <Slot $w={10} $ml={30}><StyleLetter $i>I</StyleLetter></Slot>
          <Slot $w={15} $ml={28}><UnderLetter>U</UnderLetter></Slot>
          <Slot $w={10} $ml={17}><Chevron /></Slot>
          <Slot $w={26} $ml={14}><StrikeLetter>ab</StrikeLetter></Slot>
          <Slot $w={18} $ml={22}><ScriptLetter>x<ScriptMark>2</ScriptMark></ScriptLetter></Slot>
          <Slot $w={19} $ml={24}><ScriptLetter>x<ScriptMark $up>2</ScriptMark></ScriptLetter></Slot>
          <MiniSep $ml={19} />
          <Slot $w={26} $ml={20}><TextEffectIcon /></Slot>
          <Slot $w={10} $ml={9}><Chevron /></Slot>
          <Slot $w={26} $ml={16}><HighlightIcon /></Slot>
          <Slot $w={10} $ml={10}><Chevron /></Slot>
          <Slot $w={26} $ml={16}><FontColorIcon /></Slot>
          <Slot $w={10} $ml={10}><Chevron /></Slot>
        </ToolRow>
      </TwoRows>
      <Sep />
      <TwoRows $w={449}>
        <ToolRow>
          <Slot $w={25} $ml={21}><BulletsIcon /></Slot>
          <Slot $w={10} $ml={12}><Chevron /></Slot>
          <NumberingButton>
            <NumberingMain><NumberedIcon /></NumberingMain>
            <NumberingDrop><Chevron /></NumberingDrop>
          </NumberingButton>
          <Slot $w={28} $ml={9}><MultiListIcon /></Slot>
          <Slot $w={10} $ml={10}><Chevron /></Slot>
          <MiniSep $ml={17} />
          <Slot $w={23} $ml={20}><IndentIcon /></Slot>
          <Slot $w={23} $ml={18}><IndentIcon right /></Slot>
          <MiniSep $ml={21} />
          <Slot $w={27} $ml={18}><SortIcon /></Slot>
          <MiniSep $ml={18} />
          <Slot $w={17} $ml={24}><Pilcrow>¶</Pilcrow></Slot>
        </ToolRow>
        <ToolRow>
          <ActiveAlign><AlignIcon mode="left" /></ActiveAlign>
          <Slot $w={23} $ml={11}><AlignIcon mode="center" /></Slot>
          <Slot $w={23} $ml={19}><AlignIcon mode="right" /></Slot>
          <Slot $w={23} $ml={17}><AlignIcon mode="justify" /></Slot>
          <MiniSep $ml={22} />
          <Slot $w={26} $ml={19}><LineSpacingIcon /></Slot>
          <Slot $w={10} $ml={10}><Chevron /></Slot>
          <MiniSep $ml={18} />
          <Slot $w={24} $ml={20}><ShadingIcon /></Slot>
          <Slot $w={10} $ml={11}><Chevron /></Slot>
          <Slot $w={25} $ml={14}><BordersIcon /></Slot>
          <Slot $w={10} $ml={11}><Chevron /></Slot>
        </ToolRow>
      </TwoRows>
      <Sep />
      <Gallery>
        <StyleCard>
          <StylePreview>AaBbCcDdEe</StylePreview>
          <StyleName>Normal</StyleName>
        </StyleCard>
        <StyleCard>
          <StylePreview>AaBbCcDdEe</StylePreview>
          <StyleName>No Spacing</StyleName>
        </StyleCard>
        <StyleCard>
          <StylePreview $heading>AaBbCc</StylePreview>
          <StyleName>Heading 1</StyleName>
        </StyleCard>
        <GalleryMore>
          <Ic w={7} h={12} stroke="#444" sw={1.800}><path d="M1 1l5 5-5 5" /></Ic>
        </GalleryMore>
      </Gallery>
      <BigTool $w={77} $pr={15}>
        <BigIcon><PaneIcon /></BigIcon>
        <RibbonLabel>Styles<br />Pane</RibbonLabel>
      </BigTool>
      <Sep />
      <BigTool $w={97} $pr={3}>
        <BigIcon><MicIcon /></BigIcon>
        <RibbonLabel>Dictate</RibbonLabel>
      </BigTool>
      <Sep />
      <BigTool $w={101} $pr={2}>
        <BigIcon><AddInsIcon /></BigIcon>
        <RibbonLabel>Add-ins</RibbonLabel>
      </BigTool>
      <Sep />
      <BigTool $w={92} $pr={5}>
        <BigIcon><EditorIcon /></BigIcon>
        <RibbonLabel>Editor</RibbonLabel>
      </BigTool>
    </Ribbon>

    <RulerBar>
      <RulerCorner><CornerIcon /></RulerCorner>
      <RulerTrack>
        <RulerBlank $w={334} />
        <RulerMargin $w={160} />
        <RulerBlank $w={1042} />
        <RulerMargin $w={161} />
        <HRulerMarks />
      </RulerTrack>
    </RulerBar>

    <Workspace>
      <VRuler>
        <VRulerMargin />
        <VRulerTicks />
      </VRuler>
      <CanvasBand>
        <Canvas>
          <Page>
            <Line>Some of you may have noticed in recent weeks that the shelves in the home goods section are beginning</Line>
            <Line>to sag. We will be replacing those shelves with new, reinforced metal shelves starting next week. The</Line>
            <Line>shelves will be replaced 1:00–4:00 a.m., during our least busy hours. Several aisles will be off-limits to</Line>
            <Line $gap={34.2}>customers during that time as a safety precaution.</Line>
            <Line $gap={36}>The following aisles will be affected:</Line>
            <ListItem><ListNumber>1.</ListNumber><Selected $w={199}>Kitchen appliances</Selected></ListItem>
            <ListItem><ListNumber>2.</ListNumber><Selected $w={272}>Kitchen &amp; dining furniture</Selected></ListItem>
            <ListItem><ListNumber>3.</ListNumber><Selected $w={168}>Kitchen storage</Selected></ListItem>
            <ListItem $gap={34.2}><ListNumber>4.</ListNumber><Selected $w={240}>Home goods clearance</Selected></ListItem>
            <Line>Please direct customers looking for items in the affected aisles to the Outdoor Furniture and Patio</Line>
            <Line>Accessories areas.</Line>
          </Page>
        </Canvas>
      </CanvasBand>
    </Workspace>

    <StatusBar>
      <StatusText $ml={39}>Page 1 of 1</StatusText>
      <StatusText $ml={33}>15 of 101 words</StatusText>
      <Slot $w={22} $ml={31}><ProofIcon /></Slot>
      <StatusText $ml={33}>English (United States)</StatusText>
      <StatusRight>
        <Slot $w={24}><FocusIcon /></Slot>
        <StatusText $ml={11}>Focus</StatusText>
        <ViewActive><PrintViewIcon /></ViewActive>
        <Slot $w={26} $ml={16}><WebViewIcon /></Slot>
        <Slot $w={24} $ml={32}><OutlineViewIcon /></Slot>
        <Slot $w={22} $ml={34}><DraftViewIcon /></Slot>
        <Slot $w={13} $ml={30}><ZoomMinus /></Slot>
        <ZoomTrack><ZoomThumb /></ZoomTrack>
        <Slot $w={13} $ml={11}><ZoomPlus /></Slot>
        <StatusText $ml={27}>139%</StatusText>
      </StatusRight>
    </StatusBar>

    <ArrowLayer width="2048" height="1280" viewBox="0 0 2048 1280">
      <polygon points="779,190 820,190 1234,910 1204,927" fill="#990099" />
      <path d="M791 279L803 195L880 228" fill="#990099" stroke="#990099" strokeWidth="38" strokeLinecap="round" strokeLinejoin="round" />
    </ArrowLayer>
  </Window>
);

export default App;
